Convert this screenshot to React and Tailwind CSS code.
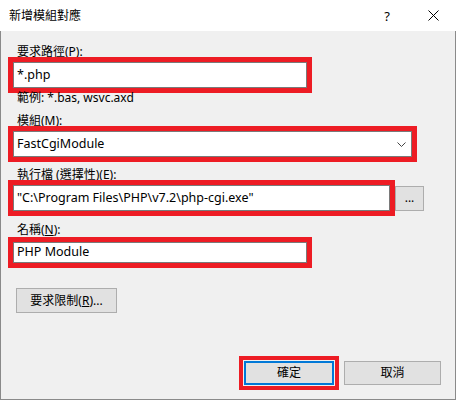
export default function App() {
  const font = { fontFamily: '"Noto Sans", "Noto Sans CJK TC", sans-serif' };
  return (
    <div className="w-[457px] h-[401px] bg-white text-[12px] text-black" style={font}>
      <div className="w-[456px] h-[400px] flex flex-col">
        {/* Title bar */}
        <div className="h-[31px] bg-white flex items-center relative">
          <span className="ml-[9px] text-[12px] leading-[14px] mt-[1px]">新增模組對應</span>
          <span className="ml-auto w-[14px] text-center text-[13px] leading-[14px] mr-[34px]">?</span>
          <svg className="mr-[17px]" width="11" height="11" viewBox="0 0 11 11">
            <path d="M0.5 0.5 L10.5 10.5 M10.5 0.5 L0.5 10.5" stroke="#000" strokeWidth="1" fill="none" />
          </svg>
        </div>
        {/* Body */}
        <div className="h-[369px] bg-[#f0f0f0] border-l border-r border-b border-[#8a8a8a] flex flex-col pl-[7px]">
          <div className="mt-[14px] h-[14px] leading-[14px] ml-[9px]">要求路徑(P):</div>
          <div className="mt-[-2px] h-[36px] w-[304px] border-[5px] border-[#ed1c24] flex">
            <div className="flex-1 bg-white border border-[#7a7a7a] flex items-center pl-[3px] text-[12.5px]">*.php</div>
          </div>
          <div className="mt-[-2px] h-[14px] leading-[14px] ml-[9px]">範例: *.bas, wsvc.axd</div>
          <div className="mt-[9px] h-[14px] leading-[14px] ml-[9px]">模組(M):</div>
          <div className="mt-[-2px] h-[36px] w-[409px] border-[5px] border-[#ed1c24] flex">
            <div className="flex-1 bg-white border border-[#7a7a7a] flex items-center pl-[3px] text-[12.5px]">
              <span>FastCgiModule</span>
              <svg className="ml-auto mr-[5px]" width="9" height="5" viewBox="0 0 9 5">
                <path d="M0.5 0.5 L4.5 4.5 L8.5 0.5" stroke="#444" strokeWidth="1" fill="none" />
              </svg>
            </div>
          </div>
          <div className="mt-[6px] h-[14px] leading-[14px] ml-[9px]">
            執行檔 (選擇性)(<span className="underline">E</span>):
          </div>
          <div className="mt-[-2px] h-[36px] flex items-center">
            <div className="h-[36px] w-[387px] border-[5px] border-[#ed1c24] flex">
              <div className="flex-1 bg-white border border-[#7a7a7a] flex items-center pl-[3px] text-[12.5px]">
                "C:\Program Files\PHP\v7.2\php-cgi.exe"
              </div>
            </div>
            <div className="w-[29px] h-[25px] bg-[#e1e1e1] border border-[#adadad] flex items-center justify-center">
              ...
            </div>
          </div>
          <div className="mt-[7px] h-[14px] leading-[14px] ml-[9px]">
            名稱(<span className="underline">N</span>):
          </div>
          <div className="h-[31px] w-[304px] border-[5px] border-[#ed1c24] flex">
            <div className="flex-1 bg-white border border-[#7a7a7a] flex items-center pl-[3px] text-[12.5px]">PHP Module</div>
          </div>
          <div className="mt-[20px] ml-[8px] w-[101px] h-[25px] bg-[#e1e1e1] border border-[#adadad] flex items-center justify-center">
            要求限制(<span className="underline">R</span>)...
          </div>
          <div className="mt-[43px] flex items-center justify-end pr-[14px]">
            <div className="w-[100px] h-[34px] border-[4px] border-[#ed1c24] p-[1px] bg-[#f0f0f0] flex">
              <div className="flex-1 bg-[#e1e1e1] border-2 border-[#0078d7] flex items-center justify-center">確定</div>
            </div>
            <div className="ml-[5px] w-[97px] h-[24px] bg-[#e1e1e1] border border-[#adadad] flex items-center justify-center">
              取消
            </div>
          </div>
        </div>
      </div>
    </div>
  );
}
